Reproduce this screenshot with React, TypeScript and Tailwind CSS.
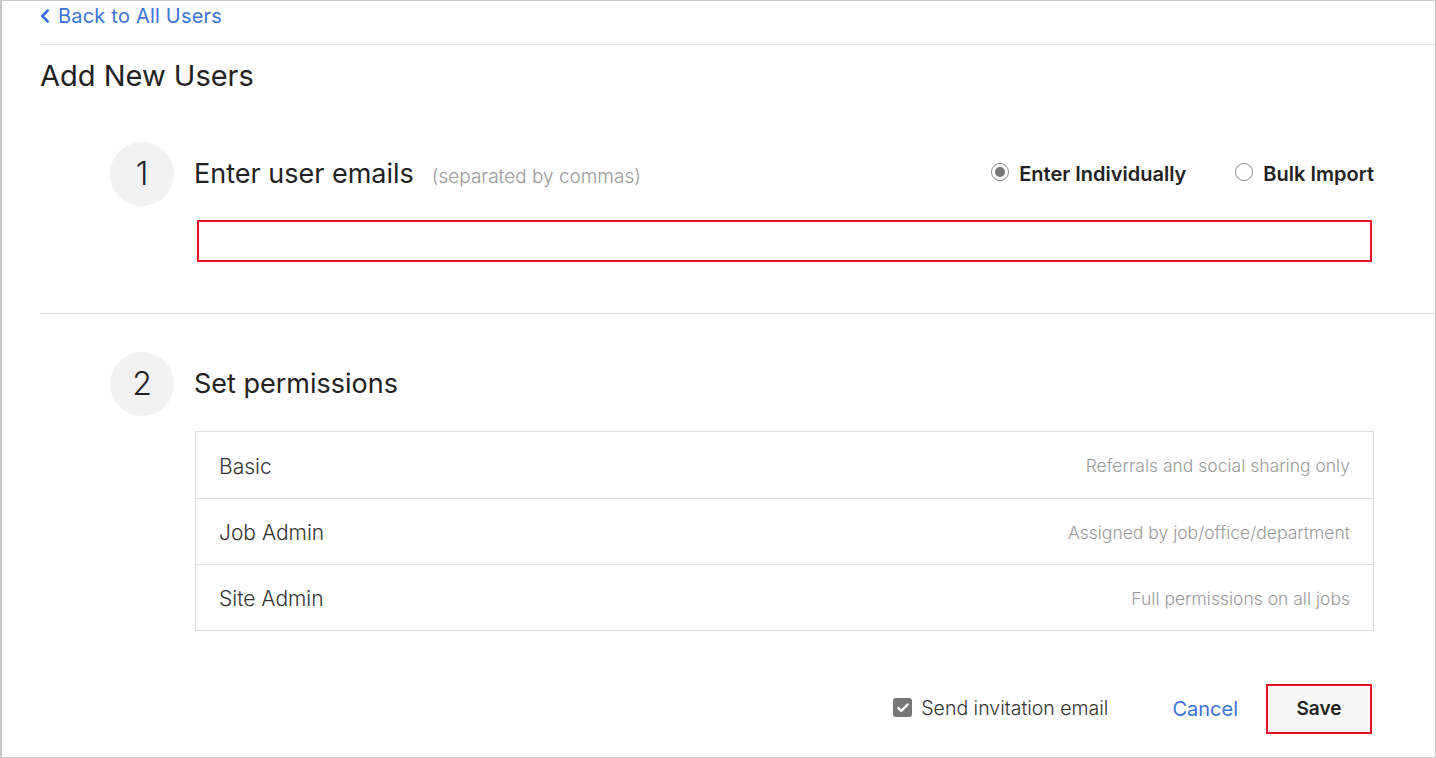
import { ChevronLeft, Check } from 'lucide-react';

const font = { fontFamily: 'Inter, "Noto Sans", sans-serif' };

const permissions = [
  { name: 'Basic', desc: 'Referrals and social sharing only' },
  { name: 'Job Admin', desc: 'Assigned by job/office/department' },
  { name: 'Site Admin', desc: 'Full permissions on all jobs' },
];

function StepCircle({ n }: { n: number }) {
  return (
    <div className="w-16 h-16 rounded-full bg-[#f2f2f2] flex items-center justify-center text-[32px] text-[#222] font-light shrink-0">
      {n}
    </div>
  );
}

function Radio({ checked, label }: { checked?: boolean; label: string }) {
  return (
    <label className="flex items-center gap-[10px] text-[20px] font-semibold text-[#222]">
      <span className="w-[18px] h-[18px] rounded-full border border-[#8a8a8a] bg-white flex items-center justify-center -mt-[5px]">
        {checked && <span className="w-[10px] h-[10px] rounded-full bg-[#777]" />}
      </span>
      {label}
    </label>
  );
}

export default function App() {
  return (
    <div className="h-[758px] w-[1436px] bg-white border-t border-b border-r border-l-2 border-[#c8c8c8] overflow-hidden" style={font}>
      <div className="pl-[38px]">
        {/* Back link */}
        <div className="h-[30px] flex items-center text-[20px] text-[#3b73d6] tracking-[0.2px]">
          <ChevronLeft className="w-[22px] h-[22px] -ml-[6px] mr-[2px]" strokeWidth={3} />
          Back to All Users
        </div>
        <div className="mt-[13px] border-t border-[#dddddd]" />

        <h1 className="mt-[13px] h-[36px] leading-[36px] text-[29px] text-[#222] font-normal">Add New Users</h1>

        {/* Step 1 */}
        <section className="mt-[48px] pl-[70px] pr-[61px]">
          <div className="flex items-center">
            <StepCircle n={1} />
            <div className="ml-5 flex items-baseline">
              <span className="text-[27px] text-[#222]">Enter user emails</span>
              <span className="ml-[18px] text-[19px] text-[#9a9a9a] font-light">(separated by commas)</span>
            </div>
            <div className="ml-auto flex items-center gap-[49px]">
              <Radio checked label="Enter Individually" />
              <Radio label="Bulk Import" />
            </div>
          </div>
          <div className="ml-[87px] mr-[2px] mt-[14px] h-[42px] border-2 border-[#e81123] bg-white" />
        </section>

        <div className="mt-[51px] border-t border-[#dddddd]" />

        {/* Step 2 */}
        <section className="mt-[38px] pl-[70px] pr-[61px]">
          <div className="flex items-center">
            <StepCircle n={2} />
            <span className="ml-5 text-[27px] text-[#222]">Set permissions</span>
          </div>
          <div className="ml-[85px] mt-[15px] border border-[#dddddd]">
            {permissions.map((p, i) => (
              <div
                key={p.name}
                className={`h-[66px] flex items-center justify-between px-[23px] pt-[3px] ${i > 0 ? 'border-t border-[#dddddd]' : ''}`}
              >
                <span className="text-[21px] text-[#333] font-light">{p.name}</span>
                <span className="text-[17.5px] text-[#9a9a9a] font-light">{p.desc}</span>
              </div>
            ))}
          </div>

          <div className="mt-[53px] flex items-center justify-end">
            <label className="flex items-center gap-[9px] text-[19.5px] text-[#333] font-light">
              <span className="w-[19px] h-[19px] rounded-[3px] bg-[#777] flex items-center justify-center -mt-[3px]">
                <Check className="w-[14px] h-[14px] text-white" strokeWidth={4} />
              </span>
              Send invitation email
            </label>
            <button className="ml-[64px] text-[20px] text-[#3b73d6]">Cancel</button>
            <button className="ml-[28px] mr-[2px] w-[106px] h-[50px] bg-[#f7f7f7] border-2 border-[#e81123] text-[19px] font-semibold text-[#222]">
              Save
            </button>
          </div>
        </section>
      </div>
    </div>
  );
}
